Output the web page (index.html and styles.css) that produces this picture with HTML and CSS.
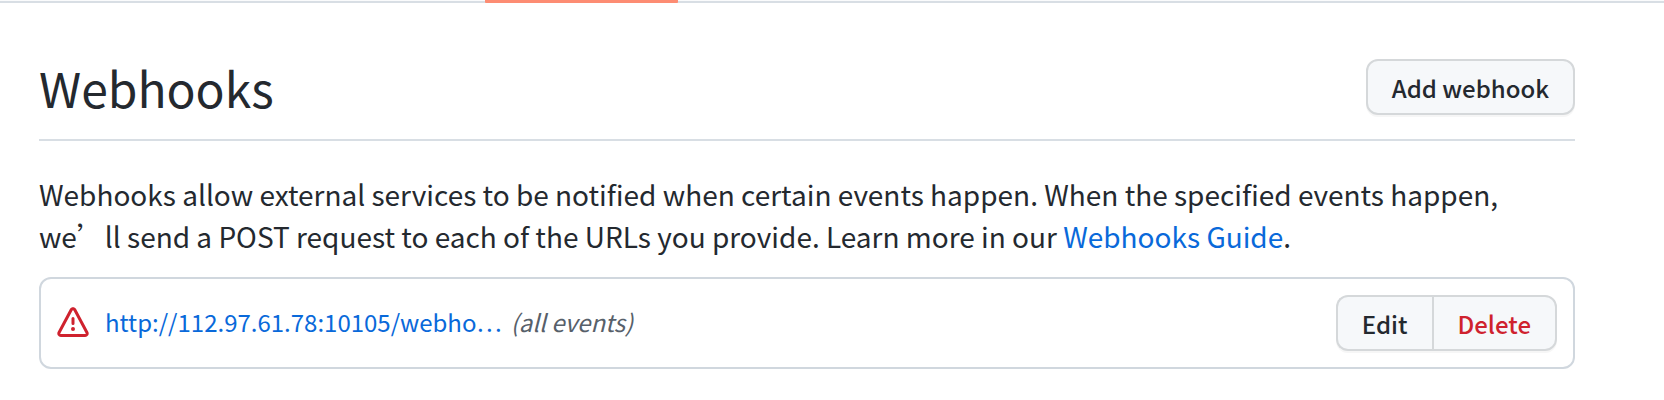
FILE: index.html
```html
<!DOCTYPE html>
<html lang="en">
<head>
<meta charset="utf-8">
<title>Webhooks</title>
<link rel="stylesheet" href="styles.css">
</head>
<body>
<nav class="tabs"><span class="tab-active"></span></nav>
<main class="content">
  <header class="head">
    <h1 class="title">Webhooks</h1>
    <button class="btn">Add webhook</button>
  </header>
  <p class="intro">Webhooks allow external services to be notified when certain events happen. When the specified events happen,<br>we’ll send a POST request to each of the URLs you provide. Learn more in our <a href="#">Webhooks Guide</a>.</p>
  <section class="hook">
    <svg class="alert" viewBox="0 0 16 16"><path fill-rule="evenodd" d="M8.22 1.754a.25.25 0 00-.44 0L1.698 13.132a.25.25 0 00.22.368h12.164a.25.25 0 00.22-.368L8.22 1.754zm-1.763-.707c.659-1.234 2.427-1.234 3.086 0l6.082 11.378A1.75 1.75 0 0114.082 15H1.918a1.75 1.75 0 01-1.543-2.575L6.457 1.047zM9 11a1 1 0 11-2 0 1 1 0 012 0zm-.25-5.25a.75.75 0 00-1.5 0v2.5a.75.75 0 001.5 0v-2.5z"/></svg>
    <a class="url" href="#">http://112.97.61.78:10105/webho…</a>
    <em class="events">(all events)</em>
    <div class="group"><button class="btn">Edit</button><button class="btn danger">Delete</button></div>
  </section>
</main>
</body>
</html>
```
FILE: styles.css
```css
* { box-sizing: border-box; }
body { margin: 0; background: #fff; color: #24292f; font-family: "Noto Sans CJK SC", "Noto Sans", sans-serif; font-size: 28px; overflow: hidden; }
a { color: #0969da; text-decoration: none; }
.tabs { height: 3px; display: flex; padding-left: 485px; background: linear-gradient(#fafbfc 1px, #d8dee4 1px); }
.tab-active { width: 193px; height: 3px; background: #fd8c73; border-radius: 0 0 1px 1px; }
.content { width: 1536px; margin-left: 39px; padding-top: 56px; }
.head { display: flex; justify-content: space-between; align-items: flex-start; height: 82px; border-bottom: 2px solid #d8dee4; }
.title { margin: -2px 0 0; font-size: 48px; font-weight: 400; line-height: 60px; }
.btn { height: 56px; padding: 2px 24px 0; border: 2px solid #d5d8da; border-radius: 12px; background: #f6f8fa; color: #24292f; font: 500 24px/50px "Noto Sans CJK SC", sans-serif; box-shadow: 0 2px 0 rgba(27,31,36,.04); white-space: nowrap; }
.intro { margin: 32px 0 0; line-height: 42px; white-space: nowrap; }
.hook { display: flex; align-items: center; height: 92px; margin-top: 20px; padding: 0 16px; border: 2px solid #d0d7de; border-radius: 12px; }
.alert { width: 32px; height: 32px; fill: #cf222e; flex: none; }
.url { margin: -4px 0 0 16px; font-size: 24px; }
.events { margin: -4px 0 0 9px; color: #57606a; font-size: 24px; }
.group { display: flex; margin-left: auto; }
.group .btn:first-child { padding-right: 25px; border-radius: 12px 0 0 12px; border-right: 0; }
.group .btn:last-child { padding-left: 23px; border-radius: 0 12px 12px 0; }
.group .danger { color: #cf222e; }
```
